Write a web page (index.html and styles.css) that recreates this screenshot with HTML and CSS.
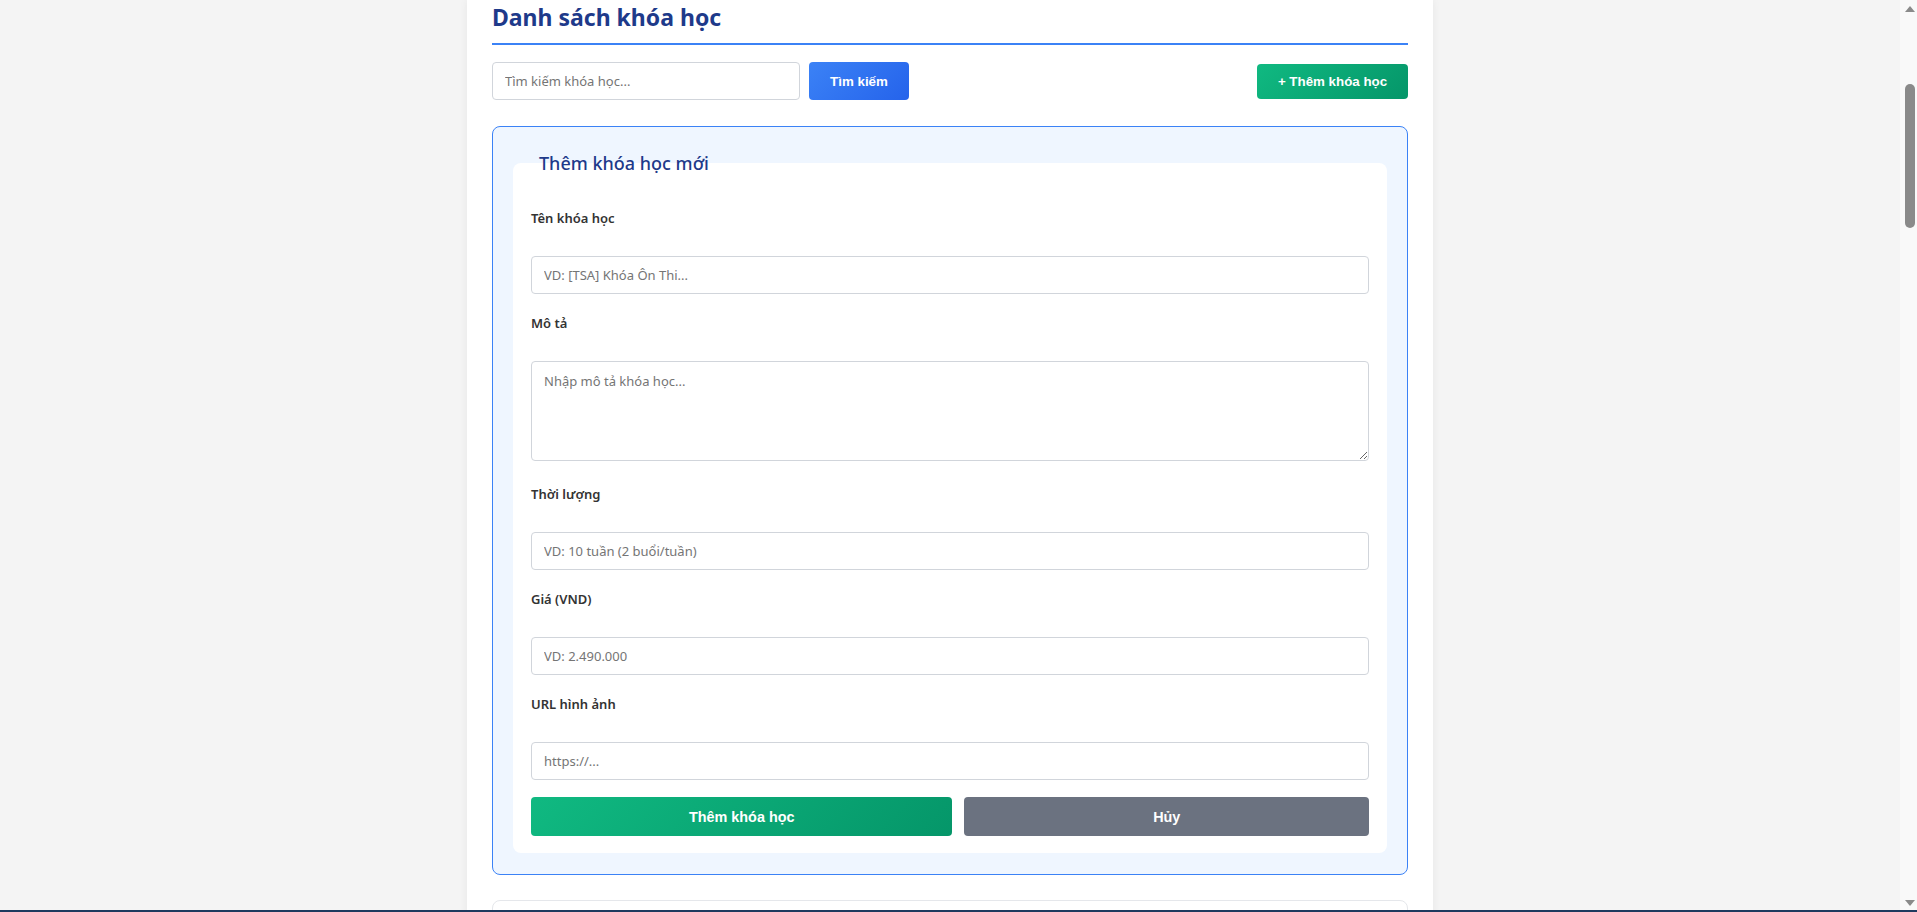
FILE: index.html
```html
<!DOCTYPE html>
<html lang="vi">
<head>
<meta charset="utf-8">
<title>Quản lý khóa học</title>
<link rel="stylesheet" href="styles.css">
</head>
<body>
<div class="page">
  <main class="panel">
    <h2 class="section-title">Danh sách khóa học</h2>

    <div class="toolbar">
      <div class="search">
        <input class="search-input" type="text" placeholder="Tìm kiếm khóa học...">
        <button class="btn btn-blue" type="button">Tìm kiếm</button>
      </div>
      <button class="btn btn-green btn-add" type="button">+ Thêm khóa học</button>
    </div>

    <div class="form-box">
      <fieldset class="course-form">
        <legend class="form-legend">Thêm khóa học mới</legend>
        <div class="form-body">
          <div class="field">
            <label class="field-label">Tên khóa học</label>
            <input class="field-input" type="text" placeholder="VD: [TSA] Khóa Ôn Thi...">
          </div>
          <div class="field">
            <label class="field-label">Mô tả</label>
            <textarea class="field-input field-textarea" placeholder="Nhập mô tả khóa học..."></textarea>
          </div>
          <div class="field">
            <label class="field-label">Thời lượng</label>
            <input class="field-input" type="text" placeholder="VD: 10 tuần (2 buổi/tuần)">
          </div>
          <div class="field">
            <label class="field-label">Giá (VND)</label>
            <input class="field-input" type="text" placeholder="VD: 2.490.000">
          </div>
          <div class="field">
            <label class="field-label">URL hình ảnh</label>
            <input class="field-input" type="text" placeholder="https://...">
          </div>
          <div class="form-actions">
            <button class="btn btn-green btn-submit" type="button">Thêm khóa học</button>
            <button class="btn btn-gray btn-cancel" type="button">Hủy</button>
          </div>
        </div>
      </fieldset>
    </div>

    <section class="course-list">
      <div class="course-card"></div>
    </section>
  </main>
</div>

<div class="scrollbar" aria-hidden="true">
  <span class="scroll-arrow scroll-arrow-up"></span>
  <span class="scroll-thumb"></span>
  <span class="scroll-arrow scroll-arrow-down"></span>
</div>
<div class="bottom-bar"></div>
</body>
</html>
```

FILE: styles.css
```css
html {
  scrollbar-width: none;
}

body {
  margin: 0;
  padding-right: 17px;
  background: #f4f4f4;
  font-family: "Noto Sans", "Open Sans", sans-serif;
  color: #333;
}

.page {
  display: flex;
  justify-content: center;
}

.panel {
  width: 966px;
  box-sizing: border-box;
  padding: 0 25px 40px;
  background: #fff;
  box-shadow: 0 0 8px rgba(0, 0, 0, 0.06);
}

.section-title {
  margin: 0;
  padding: 1px 0 10px;
  border-bottom: 2px solid #3b82f6;
  font-size: 23px;
  font-weight: 700;
  line-height: normal;
  color: #1e3a8a;
}

.toolbar {
  margin-top: 17px;
  display: flex;
  align-items: center;
  justify-content: space-between;
}

.search {
  display: flex;
  gap: 9px;
}

.search-input {
  width: 308px;
  height: 38px;
  box-sizing: border-box;
  padding: 0 12px;
  border: 1px solid #d1d5db;
  border-radius: 4px;
  font-family: "Noto Sans", "Open Sans", sans-serif;
  font-size: 13px;
  color: #333;
  outline: none;
}

.search-input::placeholder,
.field-input::placeholder {
  color: #757575;
}

.btn {
  border: none;
  border-radius: 4px;
  color: #fff;
  font-family: "Liberation Sans", Arial, sans-serif;
  font-weight: 700;
  cursor: pointer;
}

.btn-blue {
  height: 38px;
  width: 100px;
  font-size: 13.33px;
  background: linear-gradient(135deg, #3b82f6, #2563eb);
}

.btn-green {
  background: linear-gradient(135deg, #10b981, #059669);
}

.btn-add {
  height: 35px;
  width: 151px;
  font-size: 13.33px;
}

.btn-gray {
  background: #6b7280;
}

.form-box {
  margin-top: 26px;
  padding: 24px 20px 21px;
  border: 1px solid #3b82f6;
  border-radius: 8px;
  background: #eff6ff;
}

.course-form {
  margin: 0;
  padding: 33px 18px 17px;
  border: none;
  border-radius: 8px;
  background: #fff;
  min-inline-size: 0;
}

.form-legend {
  padding: 0 8px;
  font-size: 18px;
  font-weight: 500;
  line-height: normal;
  color: #1e3a8a;
}

.form-body {
  display: flex;
  flex-direction: column;
}

.field + .field {
  margin-top: 19px;
}

.field-label {
  display: block;
  margin-bottom: 28px;
  font-size: 13px;
  font-weight: 600;
  line-height: 20px;
  color: #333;
}

.field-input {
  display: block;
  width: 100%;
  height: 38px;
  box-sizing: border-box;
  margin: 0;
  padding: 0 12px;
  border: 1px solid #d1d5db;
  border-radius: 4px;
  font-family: "Noto Sans", "Open Sans", sans-serif;
  font-size: 13px;
  color: #333;
  outline: none;
}

.field-textarea {
  height: 100px;
  padding: 10px 12px;
  margin-bottom: 4px;
  resize: vertical;
}

.form-actions {
  margin-top: 17px;
  display: grid;
  grid-template-columns: 422fr 405fr;
  gap: 12px;
}

.btn-submit,
.btn-cancel {
  height: 39px;
  font-size: 14.4px;
}

.course-list {
  margin-top: 25px;
  min-height: 4700px;
}

.course-card {
  height: 220px;
  border: 1px solid #e5e7eb;
  border-radius: 8px;
  background: #fff;
}

.scrollbar {
  position: fixed;
  top: 0;
  right: 0;
  bottom: 0;
  width: 17px;
  box-sizing: border-box;
  padding: 6px 0 6px 3px;
  background: #f9f9f9;
  display: flex;
  flex-direction: column;
  align-items: center;
  z-index: 5;
}

.scroll-arrow {
  width: 0;
  height: 0;
  border-left: 5px solid transparent;
  border-right: 5px solid transparent;
}

.scroll-arrow-up {
  border-bottom: 6px solid #8a8a8a;
}

.scroll-arrow-down {
  margin-top: auto;
  border-top: 6px solid #8a8a8a;
}

.scroll-thumb {
  margin-top: 72px;
  width: 10px;
  height: 144px;
  border-radius: 5px;
  background: #8a8a8a;
}

.bottom-bar {
  position: fixed;
  left: 0;
  right: 0;
  bottom: 0;
  height: 2px;
  background: #1e3a5f;
  z-index: 10;
}
```
